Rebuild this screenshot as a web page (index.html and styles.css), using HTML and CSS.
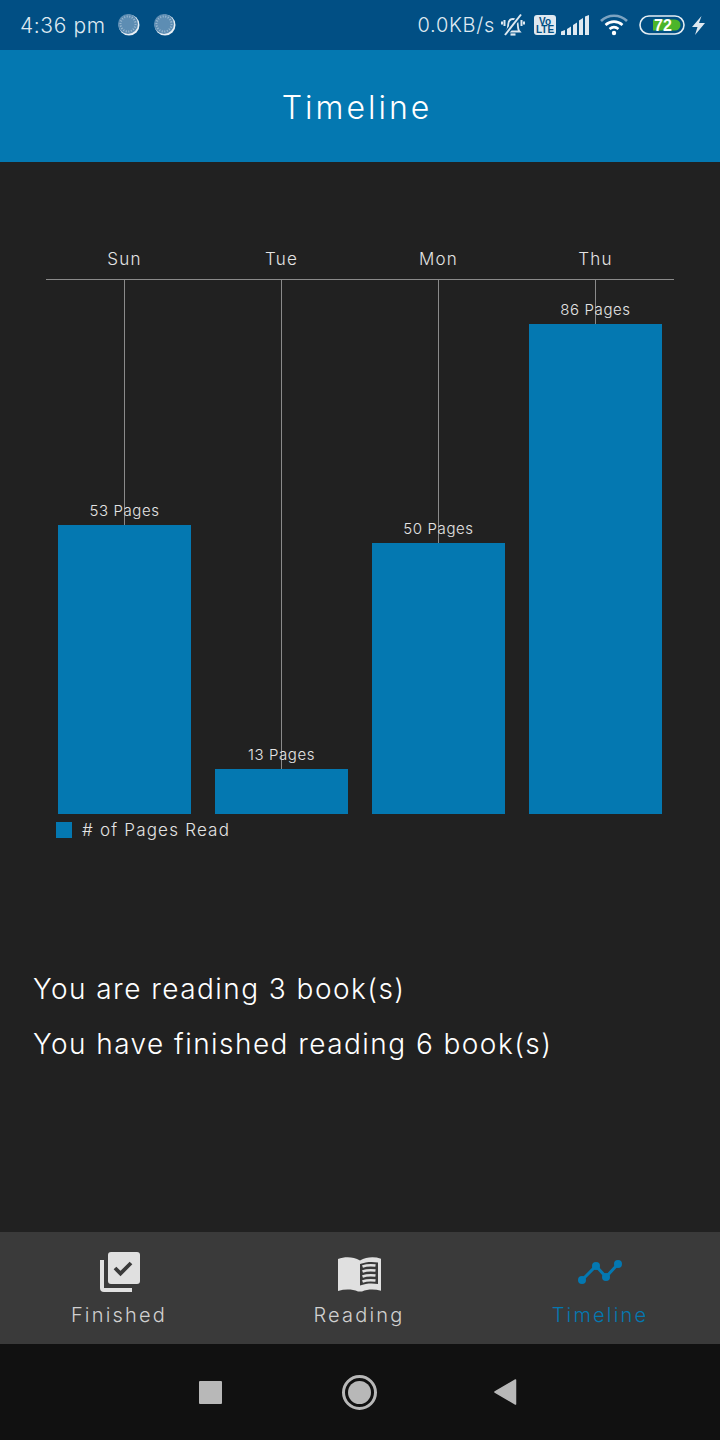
FILE: index.html
```html
<!DOCTYPE html>
<html lang="en">
<head>
<meta charset="utf-8">
<title>Timeline</title>
<link rel="stylesheet" href="styles.css">
</head>
<body>
<div class="app">
  <header class="status">
    <div class="status-left">
      <span class="clock">4:36 pm</span>
      <svg class="spin" viewBox="0 0 22 22"><circle cx="11" cy="11" r="10.500" fill="#e8eff5"/><circle cx="10" cy="10" r="10" fill="#5d8db3"/><circle cx="10" cy="10" r="7.500" fill="none" stroke="#9dbbd2" stroke-width="2" stroke-dasharray="1 1.600"/></svg>
      <svg class="spin" viewBox="0 0 22 22"><circle cx="11" cy="11" r="10.500" fill="#e8eff5"/><circle cx="10" cy="10" r="10" fill="#5d8db3"/><circle cx="10" cy="10" r="7.500" fill="none" stroke="#9dbbd2" stroke-width="2" stroke-dasharray="1 1.600"/></svg>
    </div>
    <div class="status-right">
      <span class="speed">0.0KB/s</span>
      <svg class="i-bell" viewBox="0 0 24 24" fill="none" stroke="#dfe9f1" stroke-width="1.800"><path d="M5.500 18.500c1.500-1.500 1.500-4 1.700-7C7.500 8 9.500 6 12 6s4.500 2 4.800 5.500c.2 3 .2 5.500 1.700 7z"/><path d="M9.500 21.500h5" stroke-width="2.200"/><path d="M3.500 7v6M20.500 7v6M1 8.500v3M23 8.500v3" stroke-width="2"/><path d="M3.500 22.500 20.500 1" stroke="#014f84" stroke-width="4.500"/><path d="M4 22 20 1.500" stroke-width="2"/></svg>
      <svg class="i-volte" viewBox="0 0 22 20"><rect width="22" height="20" rx="3" fill="#dfe9f1"/><text x="11" y="9.500" class="volte-a">Vo</text><text x="11" y="18" class="volte-b">LTE</text></svg>
      <svg class="i-signal" viewBox="0 0 28 20" fill="#dfe9f1"><path d="M0 16.500 4 15v5H0zM6 14l4-2.500V20H6zM12 10l4-2.500V20h-4zM18 5.500 22 3v17h-4zM24 1.500 28 0v20h-4z"/></svg>
      <svg class="i-wifi" viewBox="0 0 28 22" fill="none" stroke-width="2.600"><path d="M1 7C8 0 20 0 27 7" stroke="#7ca3c1"/><path d="M5.500 11c5-4.500 12-4.500 17 0M9.500 15c3-2.500 6-2.500 9 0" stroke="#fff"/><circle cx="14" cy="19" r="2.200" fill="#fff" stroke="none"/></svg>
      <svg class="i-batt" viewBox="0 0 46 20"><rect x="1" y="1" width="44" height="18" rx="9" fill="none" stroke="#e4edf3" stroke-width="1.600"/><path d="M14 4.500h22a5.500 5.500 0 0 1 0 11H14z" fill="#4cb52a"/><text x="15" y="16" class="batt-t">72</text></svg>
      <svg class="i-bolt" viewBox="0 0 13 19" fill="#dfe9f1"><path d="M9.500 0 0 11h5.500L3 19 13 7H7z"/></svg>
    </div>
  </header>

  <div class="appbar">Timeline</div>

  <main class="content">
    <section class="chart">
      <div class="plot">
        <div class="col">
          <div class="day">Sun</div>
          <div class="stem"><span class="value">53 Pages</span></div>
          <div class="bar" style="height:289px"></div>
        </div>
        <div class="col">
          <div class="day">Tue</div>
          <div class="stem"><span class="value">13 Pages</span></div>
          <div class="bar" style="height:45px"></div>
        </div>
        <div class="col">
          <div class="day">Mon</div>
          <div class="stem"><span class="value">50 Pages</span></div>
          <div class="bar" style="height:271px"></div>
        </div>
        <div class="col">
          <div class="day">Thu</div>
          <div class="stem"><span class="value">86 Pages</span></div>
          <div class="bar" style="height:490px"></div>
        </div>
      </div>
      <div class="legend"><span class="swatch"></span><span class="legend-text"># of Pages Read</span></div>
    </section>
    <section class="summary">
      <p>You are reading 3 book(s)</p>
      <p>You have finished reading 6 book(s)</p>
    </section>
  </main>

  <nav class="tabs">
    <div class="tab">
      <svg class="tab-icon" viewBox="0 0 44 44"><path d="M5 8v28a2 2 0 0 0 2 2h28" fill="none" stroke="#e0e0e0" stroke-width="4"/><rect x="11" y="0" width="32" height="32" rx="3" fill="#e0e0e0"/><path d="m18 16 5.500 5.500L34 11" fill="none" stroke="#3a3a3a" stroke-width="3.800"/></svg>
      <span class="tab-label">Finished</span>
    </div>
    <div class="tab">
      <svg class="tab-icon" viewBox="-1 0 44 44"><path d="M0 7C7 4.500 15 4.500 22 8.500 29 4.500 37 4.500 44 7V39C37 37 30 37 24 39.500H20C14 37 7 37 0 39z" fill="#e0e0e0"/><path d="M22 12C28 9.500 35 9.500 40 10.500V32C35 31 28 31 22 33.500z" fill="#3a3a3a"/><path d="M24.500 14.500c4-1.500 9-1.500 13-1M24.500 19.500c4-1.500 9-1.500 13-1M24.500 24.500c4-1.500 9-1.500 13-1M24.500 29.500c4-1.500 9-1.500 13-1" fill="none" stroke="#e0e0e0" stroke-width="2.600"/></svg>
      <span class="tab-label">Reading</span>
    </div>
    <div class="tab tab-active">
      <svg class="tab-icon" viewBox="0 0 44 44" fill="#0478b1"><path d="M4 28 18 14l10 11L40 12" fill="none" stroke="#0478b1" stroke-width="3"/><circle cx="4" cy="28" r="4"/><circle cx="18" cy="14" r="4"/><circle cx="28" cy="25" r="4"/><circle cx="40" cy="12" r="4"/></svg>
      <span class="tab-label">Timeline</span>
    </div>
  </nav>

  <footer class="sysnav">
    <span class="sys-square"></span>
    <span class="sys-home"><span class="sys-dot"></span></span>
    <svg class="sys-back" viewBox="0 0 23 26"><path d="M21.500 1 1 13l20.500 12z" fill="#b8b8b8" stroke="#b8b8b8" stroke-width="1.500" stroke-linejoin="round"/></svg>
  </footer>
</div>
</body>
</html>
```
FILE: styles.css
```css
* { box-sizing: border-box; }
html, body { margin: 0; padding: 0; }
body { background: #212121; font-family: "Inter", "Liberation Sans", sans-serif; font-weight: 300; }
.app { width: 720px; height: 1440px; display: flex; flex-direction: column; overflow: hidden; }

.status { height: 50px; flex: none; background: #014f84; display: flex; justify-content: space-between; align-items: center; padding: 0 15px 0 20px; color: #dfe9f1; }
.status-left { display: flex; align-items: center; }
.clock { font-size: 21px; letter-spacing: 0.6px; width: 98px; white-space: nowrap; }
.spin { width: 22px; height: 22px; margin-right: 14px; }
.status-right { display: flex; align-items: center; }
.speed { font-size: 20px; letter-spacing: 0.7px; margin-right: 6px; white-space: nowrap; }
.i-bell { width: 24px; height: 24px; margin-right: 9px; }
.i-volte { width: 22px; height: 20px; margin-right: 5px; }
.volte-a, .volte-b { fill: #014f84; font-size: 10px; font-weight: 700; text-anchor: middle; font-family: "Liberation Sans", sans-serif; }
.i-signal { width: 28px; height: 20px; margin-right: 11px; }
.i-wifi { width: 28px; height: 22px; margin-right: 11px; }
.i-batt { width: 46px; height: 20px; margin-right: 7px; }
.batt-t { fill: #fff; font-size: 16px; font-weight: 700; font-family: "Liberation Sans", sans-serif; }
.i-bolt { width: 13px; height: 19px; }

.appbar { height: 112px; flex: none; background: #0478b1; color: #fff; display: flex; align-items: center; justify-content: center; font-size: 32px; letter-spacing: 3px; padding: 2px 6px 0 0; }

.content { flex: 1; display: flex; flex-direction: column; min-height: 0; }
.chart { padding: 84px 46px 0; }
.plot { display: grid; grid-template-columns: repeat(4, 157px); height: 568px; }
.col { display: flex; flex-direction: column; align-items: center; }
.day { height: 34px; width: 100%; flex: none; border-bottom: 1px solid #8a8a8a; text-align: center; color: #e4e4e4; font-size: 17px; line-height: 26px; letter-spacing: 1.2px; }
.stem { flex: 1; width: 1px; background: #8a8a8a; position: relative; }
.value { position: absolute; left: 50%; bottom: 5px; transform: translateX(-50%); white-space: nowrap; color: #e4e4e4; font-size: 15px; line-height: 18px; letter-spacing: 0.6px; }
.bar { width: 133px; flex: none; background: #0478b1; }
.legend { display: flex; align-items: center; padding: 7px 0 0 10px; }
.swatch { width: 16px; height: 16px; background: #0478b1; margin-right: 10px; }
.legend-text { color: #e4e4e4; font-size: 17px; letter-spacing: 1.2px; line-height: 18px; }

.summary { padding: 133px 0 0 33px; color: #fff; font-size: 28px; letter-spacing: 1.45px; }
.summary p { margin: 0 0 21px; line-height: 34px; white-space: nowrap; }

.tabs { height: 112px; flex: none; background: #3a3a3a; display: grid; grid-template-columns: 238px 242px 240px; }
.tab { display: flex; flex-direction: column; align-items: center; padding-top: 20px; color: #d0d0d0; }
.tab-icon { width: 44px; height: 44px; display: block; }
.tab-label { font-size: 20px; letter-spacing: 2.2px; line-height: 24px; margin-top: 7px; }
.tab-active { color: #0478b1; }

.sysnav { height: 96px; flex: none; background: #111; display: flex; align-items: center; padding-left: 199px; }
.sys-square { width: 23px; height: 23px; background: #b8b8b8; border-radius: 1px; margin-right: 120px; }
.sys-home { width: 35px; height: 35px; border-radius: 50%; border: 3px solid #b8b8b8; display: flex; align-items: center; justify-content: center; margin-right: 117px; }
.sys-dot { width: 23px; height: 23px; border-radius: 50%; background: #b8b8b8; }
.sys-back { width: 23px; height: 26px; }
```
